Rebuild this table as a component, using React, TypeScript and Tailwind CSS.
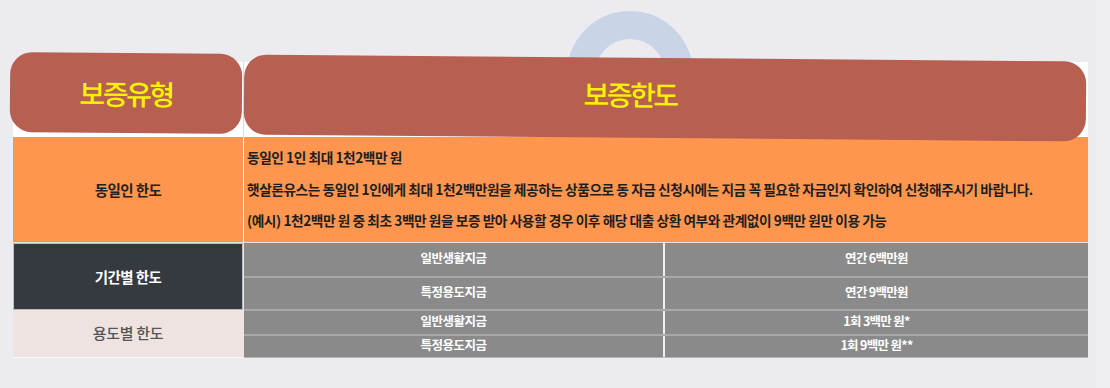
import React from "react";

const FONT = { fontFamily: '"Noto Sans CJK KR", "Noto Sans", sans-serif' };

function GrayRow({ h, a, b }: { h: string; a: string; b: string }) {
  return (
    <div className={`flex ${h}`}>
      <div className="flex w-[419px] items-center justify-center pb-[2px] text-[12.5px] font-bold tracking-[-0.5px] text-white">
        {a}
      </div>
      <div className="w-[2px] bg-[#EFEFEF]" />
      <div className="flex flex-1 items-center justify-center pb-[2px] text-[12.5px] font-bold tracking-[-0.7px] text-white">
        {b}
      </div>
    </div>
  );
}

export default function App() {
  return (
    <div className="flex h-[388px] w-[1110px] overflow-hidden bg-[#ECEBF0]" style={FONT}>
      <div className="relative w-[1096px]">
        {/* decorative ring behind header */}
        <div className="absolute left-[567px] top-[11px] h-[126px] w-[126px] rounded-full border-[28px] border-[#C9D5E7]" />

        <div className="relative ml-[13px] mt-[62px] w-[1075px]">
          {/* header row */}
          <div className="relative z-10 flex h-[75px] items-start bg-white">
            <div className="-ml-[3px] -mt-[9px] flex h-[80px] w-[232px] shrink-0 rotate-[0.5deg] items-center justify-center rounded-[22px] bg-[#B75F50] pb-[1px] text-[28px] font-medium tracking-[-2.5px] text-[#F7F300]">
              보증유형
            </div>
            <div className="ml-px w-px self-stretch bg-[#D0DCE6]" />
            <div className="-mt-[4px] flex h-[80px] w-[842px] shrink-0 rotate-[0.47deg] items-center justify-center rounded-[22px] bg-[#B75F50] pb-[8px] pr-[70px] text-[28px] font-medium tracking-[-2.5px] text-[#F7F300]">
              보증한도
            </div>
          </div>

          {/* orange row */}
          <div className="flex h-[105px]">
            <div className="flex w-[230px] items-center justify-center bg-[#FF9650] text-[14.5px] font-bold tracking-[-0.6px] text-[#222]">
              동일인 한도
            </div>
            <div className="w-px bg-white" />
            <div className="flex flex-1 flex-col justify-center bg-[#FF9650] pl-[3px] text-[13.7px] font-bold leading-[31.5px] tracking-[-0.45px] text-[#1E1E1E]">
              <div>동일인 1인 최대 1천2백만 원</div>
              <div>
                햇살론유스는 동일인 1인에게 최대 1천2백만원을 제공하는 상품으로 동 자금 신청시에는 지금 꼭 필요한 자금인지 확인하여 신청해주시기 바랍니다.
              </div>
              <div>
                (예시) 1천2백만 원 중 최초 3백만 원을 보증 받아 사용할 경우 이후 해당 대출 상환 여부와 관계없이 9백만 원만 이용 가능
              </div>
            </div>
          </div>
          <div className="h-px bg-[#E2E2E2]" />

          {/* lower rows */}
          <div className="flex h-[115px]">
            <div className="flex w-[230px] flex-col">
              <div className="flex h-[67px] items-center justify-center border border-[#BDBDBD] bg-[#343A3F] text-[14.5px] font-bold tracking-[-0.6px] text-white">
                기간별 한도
              </div>
              <div className="flex flex-1 items-center justify-center bg-[#EFE3E1] text-[15px] font-medium tracking-[-0.3px] text-[#555]">
                용도별 한도
              </div>
              <div className="h-px bg-[#F7F7F7]" />
            </div>
            <div className="w-px bg-[#E6E6E6]" />
            <div className="flex flex-1 flex-col bg-[#8A8A8A]">
              <GrayRow h="h-[33px]" a="일반생활지금" b="연간 6백만원" />
              <div className="h-[2px] bg-[#A8A8A8]" />
              <GrayRow h="h-[31px]" a="특정용도지금" b="연간 9백만원" />
              <div className="h-[2px] bg-[#A8A8A8]" />
              <GrayRow h="h-[23px]" a="일반생활지금" b="1회 3백만 원*" />
              <div className="h-[2px] bg-[#A8A8A8]" />
              <GrayRow h="h-[21px]" a="특정용도지금" b="1회 9백만 원**" />
              <div className="h-[1px] bg-[#B5B5B5]" />
            </div>
          </div>
        </div>
      </div>
      <div className="flex-1 bg-[#EFEFF3]" />
    </div>
  );
}
